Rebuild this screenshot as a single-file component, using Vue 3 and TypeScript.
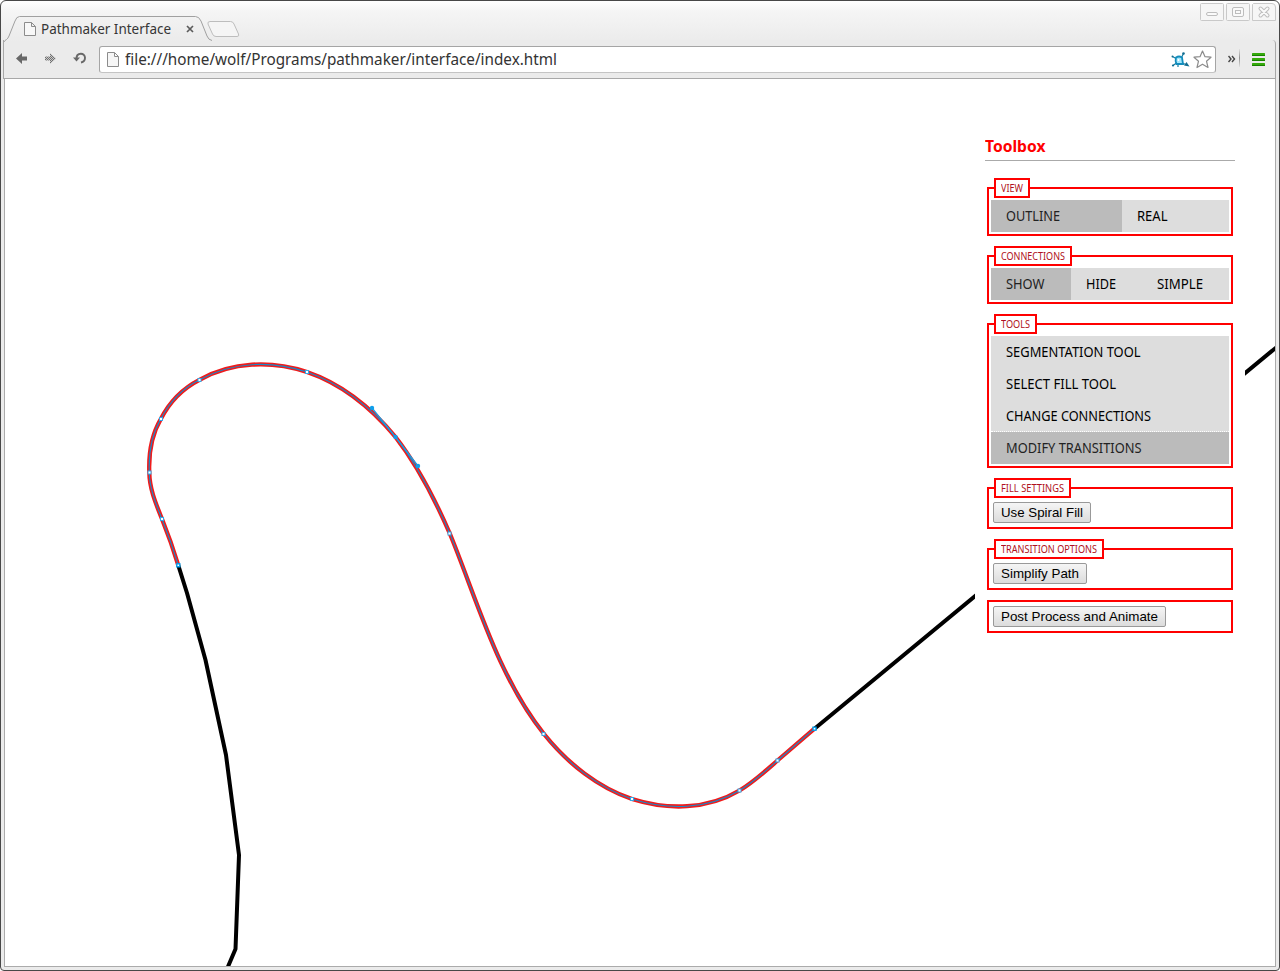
<script setup lang="ts">
interface Option {
  label: string
  width: number
  cell?: number
  active?: boolean
}
interface Group {
  legend?: string
  legendWidth?: number
  vertical?: boolean
  options?: Option[]
  button?: Option
}

const groups: Group[] = [
  {
    legend: 'View', legendWidth: 22,
    options: [
      { label: 'Outline', width: 54, cell: 131, active: true },
      { label: 'Real', width: 30.5, cell: 107 },
    ],
  },
  {
    legend: 'Connections', legendWidth: 64,
    options: [
      { label: 'Show', width: 38.5, cell: 80, active: true },
      { label: 'Hide', width: 30, cell: 71 },
      { label: 'Simple', width: 46, cell: 87 },
    ],
  },
  {
    legend: 'Tools', legendWidth: 29, vertical: true,
    options: [
      { label: 'Segmentation Tool', width: 134.5, cell: 238 },
      { label: 'Select Fill Tool', width: 110, cell: 238 },
      { label: 'Change Connections', width: 145, cell: 238 },
      { label: 'Modify Transitions', width: 135.5, cell: 238, active: true },
    ],
  },
  { legend: 'Fill Settings', legendWidth: 63, button: { label: 'Use Spiral Fill', width: 82 } },
  { legend: 'Transition Options', legendWidth: 96, button: { label: 'Simplify Path', width: 78 } },
  { button: { label: 'Post Process and Animate', width: 157 } },
]

const curve =
  'M178.3 565.3C173 548 168 534 162 519C156 504 149.5 489 149.3 472.5C148.5 453 152 434 160.8 419' +
  'C169 403 182.5 388.5 199.5 379.8C232 361.7 271 360.2 307 372C342 384 371.5 408 395.5 437' +
  'C418 466 434 497 450 534C476 597 498 677 544 734C568 764 599 788 632 799' +
  'C668 810.3 707 809.8 739.5 790.5C753 782.5 765 771.5 777.5 760.5L814.5 728.7'

const nodes: [number, number][] = [
  [162, 519], [149.5, 472.5], [161, 419], [199.5, 380], [307, 372],
  [449.5, 533.5], [543.5, 734], [632, 799], [739.5, 790.5], [777.5, 760.5],
]
const endNodes: [number, number][] = [[178.3, 565.3], [814.5, 728.7]]
const handles: [number, number][] = [[372, 408], [395.5, 437], [418, 466]]

// Condenses a label horizontally to the given width and keeps the flow in step.
const vFit = {
  mounted(el: HTMLElement, binding: { value: number }) {
    const natural = el.getBoundingClientRect().width
    el.style.transform = `scaleX(${binding.value / natural})`
    el.style.marginRight = `${binding.value - natural}px`
  },
}
</script>

<template>
  <div class="window">
    <header class="tabstrip">
      <svg class="tabshape" width="250" height="42" viewBox="0 0 250 42">
        <defs>
          <linearGradient id="tabfill" x1="0" y1="0" x2="0" y2="1">
            <stop offset="0" stop-color="#f2f2f2" />
            <stop offset="1" stop-color="#ebebeb" />
          </linearGradient>
        </defs>
        <path d="M4 42Q4.500 40.500 6.500 39.500Q8 38.500 9 36L15 21Q16.500 16.500 19.500 16.500H195.500Q199 16.500 201 21L207 36Q208.500 40.500 212 40.500V42Z" fill="url(#tabfill)" />
        <path d="M4 42Q4.500 40.500 6.500 39.500Q8 38.500 9 36L15 21Q16.500 16.500 19.500 16.500H195.500Q199 16.500 201 21L207 36Q208.500 40 212 40.500" fill="none" stroke="#a0a0a0" />
        <path d="M210 21.500H230.500Q233 21.500 234 24L238.500 34Q239.500 36.500 237 36.500H216Q213.500 36.500 212.500 34L208 24Q207.300 21.500 210 21.500Z" fill="#f5f5f5" stroke="#bdbdbd" />
      </svg>
      <div class="tab">
        <svg width="12" height="14" viewBox="0 0 12 14"><path d="M.5.5H7.500L11.500 4.500V13.500H.5ZM7.500.5V4.500H11.500" fill="#f8f8f8" stroke="#8c8c8c" /></svg>
        <span v-fit="130" class="fit title">Pathmaker Interface</span>
        <svg class="close" width="8" height="8" viewBox="0 0 8 8"><path d="M1 1L7 7M7 1L1 7" stroke="#5c5c5c" stroke-width="1.700" /></svg>
      </div>
      <div class="controls">
        <svg width="24" height="18" viewBox="0 0 24 18"><rect class="ctl" x=".5" y=".5" width="23" height="17" rx="1" /><rect class="glyph" x="6.500" y="9.500" width="11" height="3" rx="1.500" /></svg>
        <svg width="24" height="18" viewBox="0 0 24 18"><rect class="ctl" x=".5" y=".5" width="23" height="17" rx="1" /><rect class="glyph" x="6.500" y="4.500" width="11" height="9" rx="1.500" /><rect class="glyph" x="9.500" y="7.500" width="5" height="3" /></svg>
        <svg width="24" height="18" viewBox="0 0 24 18"><path class="ctl" d="M1.500.5H20Q23.500.5 23.500 4V17.500H.5V1.500Z" /><path d="M8.500 5.500L15.500 12.500M15.500 5.500L8.500 12.500" stroke="#bdbdbd" stroke-width="4" stroke-linecap="round" /><path d="M8.500 5.500L15.500 12.500M15.500 5.500L8.500 12.500" stroke="#fafafa" stroke-width="2" stroke-linecap="round" /></svg>
      </div>
    </header>

    <nav class="toolbar">
      <svg class="back" width="12" height="11" viewBox="0 0 12 11"><path d="M0 5.500L6 0V3.500H11V7.500H6V11Z" fill="#686868" /></svg>
      <svg class="forward" width="12" height="11" viewBox="0 0 12 11">
        <defs><pattern id="dither" width="2" height="2" patternUnits="userSpaceOnUse"><rect width="2" height="2" fill="#c8c8c8" /><rect width="1" height="1" fill="#707070" /><rect x="1" y="1" width="1" height="1" fill="#707070" /></pattern></defs>
        <path d="M11 5.500L5 0V3.500H0V7.500H5V11Z" fill="url(#dither)" />
      </svg>
      <svg class="reload" width="14" height="12" viewBox="0 0 14 12"><path d="M3.500 6.500C3.500 .2 12 .2 12 5.800C12 8.500 10.500 10 8 10.500" fill="none" stroke="#686868" stroke-width="1.900" /><path d="M0 5.500H7L3.500 9.500Z" fill="#686868" /></svg>
      <div class="address">
        <svg class="page" width="12" height="15" viewBox="0 0 12 15"><path d="M.5.5H7.500L11.500 4.500V14.500H.5ZM7.500.5V4.500H11.500" fill="#f6f6f6" stroke="#8c8c8c" /></svg>
        <span v-fit="432" class="fit url">file:///home/wolf/Programs/pathmaker/interface/index.html</span>
        <svg class="bug" width="19" height="16" viewBox="0 0 19 16">
          <path d="M1.500 4.500L5 6.500M2 13.500L5.500 11M10.500 5.500L12.500 1.500M11 11L15 12.500M7 12V15" stroke="#187ca0" stroke-width="1.200" />
          <path d="M5 5.500Q8 3.500 11 5.500L12 12H5.500Q4 9 5 5.500Z" fill="#a5e6fb" stroke="#138dbd" stroke-width="1.800" />
          <path d="M7.500 7V9" stroke="#fff" stroke-width="1.500" />
          <path d="M13 13.500L15.500 10L18.500 14.500Z" fill="#126d91" />
          <circle cx="12.500" cy="1.500" r="1.300" fill="#126d91" /><circle cx="1.500" cy="4.500" r="1" fill="#126d91" /><circle cx="2" cy="13.500" r="1.100" fill="#126d91" />
        </svg>
        <svg class="star" width="19" height="19" viewBox="0 0 19 19"><path d="M9.500 1L12 6.700L18 7.200L13.500 11.200L15 17.500L9.500 14.200L4 17.500L5.500 11.200L1 7.200L7 6.700Z" fill="#fff" stroke="#8c8c8c" stroke-width="1.200" stroke-linejoin="round" /></svg>
      </div>
      <svg class="more" width="8" height="8" viewBox="0 0 8 8"><path d="M.5 1L3 4L.5 7M4 1L6.500 4L4 7" fill="none" stroke="#444" stroke-width="1.400" /></svg>
      <i class="divider"></i>
      <svg class="menu" width="13" height="13" viewBox="0 0 13 13"><rect width="13" height="3" rx=".5" fill="#35a90b" /><rect y="5" width="13" height="3" rx=".5" fill="#35a90b" /><rect y="10" width="13" height="3" rx=".5" fill="#35a90b" /><path d="M0 2.500H13M0 7.500H13M0 12.500H13" stroke="#188100" /></svg>
    </nav>

    <main class="page-view">
      <svg class="drawing" width="1270" height="887" viewBox="5 79 1270 887">
        <path d="M178.300 565.300L187 593L205.500 660L226 755L239 855L235.500 949L227 969M814.500 728.700L1278 346" fill="none" stroke="#000" stroke-width="4" stroke-linejoin="round" />
        <path :d="curve" fill="none" stroke="#ef1c1c" stroke-width="4.300" />
        <path :d="curve" fill="none" stroke="#168bcb" stroke-width="1.100" />
        <path d="M372 408L395.500 437L418 466" fill="none" stroke="#169fe5" stroke-width="1.300" />
        <rect v-for="([x, y], i) in nodes" :key="'n' + i" :x="x - 1.5" :y="y - 1.5" width="3" height="3" fill="#fff" stroke="#37a6e5" />
        <rect v-for="([x, y], i) in endNodes" :key="'e' + i" :x="x - 1.5" :y="y - 1.5" width="3" height="3" fill="#fff" stroke="#009dec" stroke-width="1.400" />
        <circle v-for="([x, y], i) in handles" :key="'h' + i" :cx="x" :cy="y" r="2.200" fill="#109eea" />
      </svg>

      <aside class="toolbox">
        <h1><span v-fit="60.5" class="fit">Toolbox</span></h1>
        <fieldset v-for="(group, gi) in groups" :key="gi">
          <legend v-if="group.legend"><span v-fit="group.legendWidth" class="fit">{{ group.legend }}</span></legend>
          <ul v-if="group.options" :class="{ vertical: group.vertical }">
            <li v-for="o in group.options" :key="o.label" :class="{ active: o.active }" :style="{ width: o.cell + 'px' }">
              <span v-fit="o.width" class="fit">{{ o.label }}</span>
            </li>
          </ul>
          <button v-if="group.button" type="button"><span v-fit="group.button.width" class="fit">{{ group.button.label }}</span></button>
        </fieldset>
      </aside>
    </main>
  </div>
</template>

<style>
body { margin: 0; background: #fff; overflow: hidden; }
</style>

<style scoped>
.window {
  box-sizing: border-box;
  width: 1280px;
  height: 971px;
  border: 1px solid #484848;
  border-radius: 6px 6px 4px 4px;
  background: linear-gradient(#fff 0, #f5f5f5 10px, #ebebeb 42px, #ebebeb 100%);
  display: flex;
  flex-direction: column;
  font-family: "Noto Sans", "Open Sans", sans-serif;
}
svg { display: block; flex: none; }
.fit { display: inline-block; white-space: nowrap; transform-origin: left center; }
.tabstrip { position: relative; height: 39px; flex: none; display: flex; justify-content: space-between; }
.tabshape { position: absolute; left: -1px; top: -1px; }
.tab { position: relative; display: flex; align-items: center; height: 26px; margin: 15px 0 0 23px; }
.title { margin-left: 5px; font-size: 14px; line-height: 20px; color: #363636; }
.close { margin-left: 15px; }
.controls { display: flex; gap: 2px; margin: 2px 3px 0 0; }
.ctl { fill: #f6f6f6; stroke: #c9c9c9; }
.glyph { fill: #fafafa; stroke: #bdbdbd; }
.toolbar {
  box-sizing: border-box;
  height: 39px;
  flex: none;
  margin: 0 3px 0 2px;
  border: solid #a8a8a8;
  border-width: 0 1px 1px;
  border-radius: 0 4px 0 0;
  background: #ebebeb;
  display: flex;
  align-items: center;
}
.toolbar > * { position: relative; top: -1px; }
.back { margin-left: 12px; }
.forward { margin-left: 17px; }
.reload { margin-left: 16px; }
.address {
  box-sizing: border-box;
  width: 1117px;
  height: 27px;
  margin: 2px 0 0 12px;
  border: 1px solid #a5a5a5;
  border-bottom-color: #c4c4c4;
  border-radius: 3px;
  background: #fff;
  display: flex;
  align-items: center;
  padding-left: 7px;
}
.url { margin-left: 6px; font-size: 15.5px; line-height: 22px; color: #333; }
.bug { margin: 1px 0 0 auto; }
.star { margin: 1px 3px 0 3px; }
.more { margin: 1px 0 0 12px; }
.divider { width: 1px; height: 18px; margin: 0 12px 0 3px; background: linear-gradient(#e0e0e0, #909090, #e0e0e0); }
.menu { margin-top: 2px; }
.page-view {
  position: relative;
  height: 887px;
  margin: 0 3px;
  border: solid #ababab;
  border-width: 0 1px 1px;
  background: #fff;
  overflow: hidden;
}
.toolbox {
  position: absolute;
  left: 970px;
  top: 50px;
  box-sizing: border-box;
  width: 270px;
  height: 525px;
  padding: 0 10px;
  background: #fff;
}
h1 {
  box-sizing: border-box;
  height: 32px;
  margin: 0 0 17px;
  padding-top: 5px;
  border-bottom: 1px solid #aaa;
  font-size: 15.5px;
  line-height: 24px;
  color: #f00;
}
fieldset { min-width: 0; margin: 0 2px 10px; padding: 2px; border: 2px solid #f00; }
legend {
  box-sizing: border-box;
  height: 20px;
  margin-left: 3px;
  padding: 0 5px;
  border: 2px solid #f00;
  font-size: 10.5px;
  line-height: 16px;
  color: #b01020;
  text-transform: uppercase;
}
legend .fit, button .fit { vertical-align: top; }
ul { display: flex; margin: 0; padding: 0; list-style: none; background: #ddd; }
ul.vertical { flex-direction: column; }
li {
  box-sizing: border-box;
  height: 32px;
  padding-left: 15px;
  font-size: 13.5px;
  line-height: 32px;
  color: #000;
  text-transform: uppercase;
}
li.active { background: #bbb; color: #222; }
.vertical li.active { height: 33px; margin-top: -1px; border-top: 1px dotted #fff; background-clip: padding-box; }
button {
  display: block;
  box-sizing: border-box;
  height: 21px;
  margin: 2px;
  padding: 0 7px;
  border: 1px solid #999;
  border-radius: 2px;
  background: linear-gradient(#f5f5f5, #dcdcdc);
  font: 13.333px/19px "Liberation Sans", Arial, sans-serif;
  color: #000;
}
</style>
